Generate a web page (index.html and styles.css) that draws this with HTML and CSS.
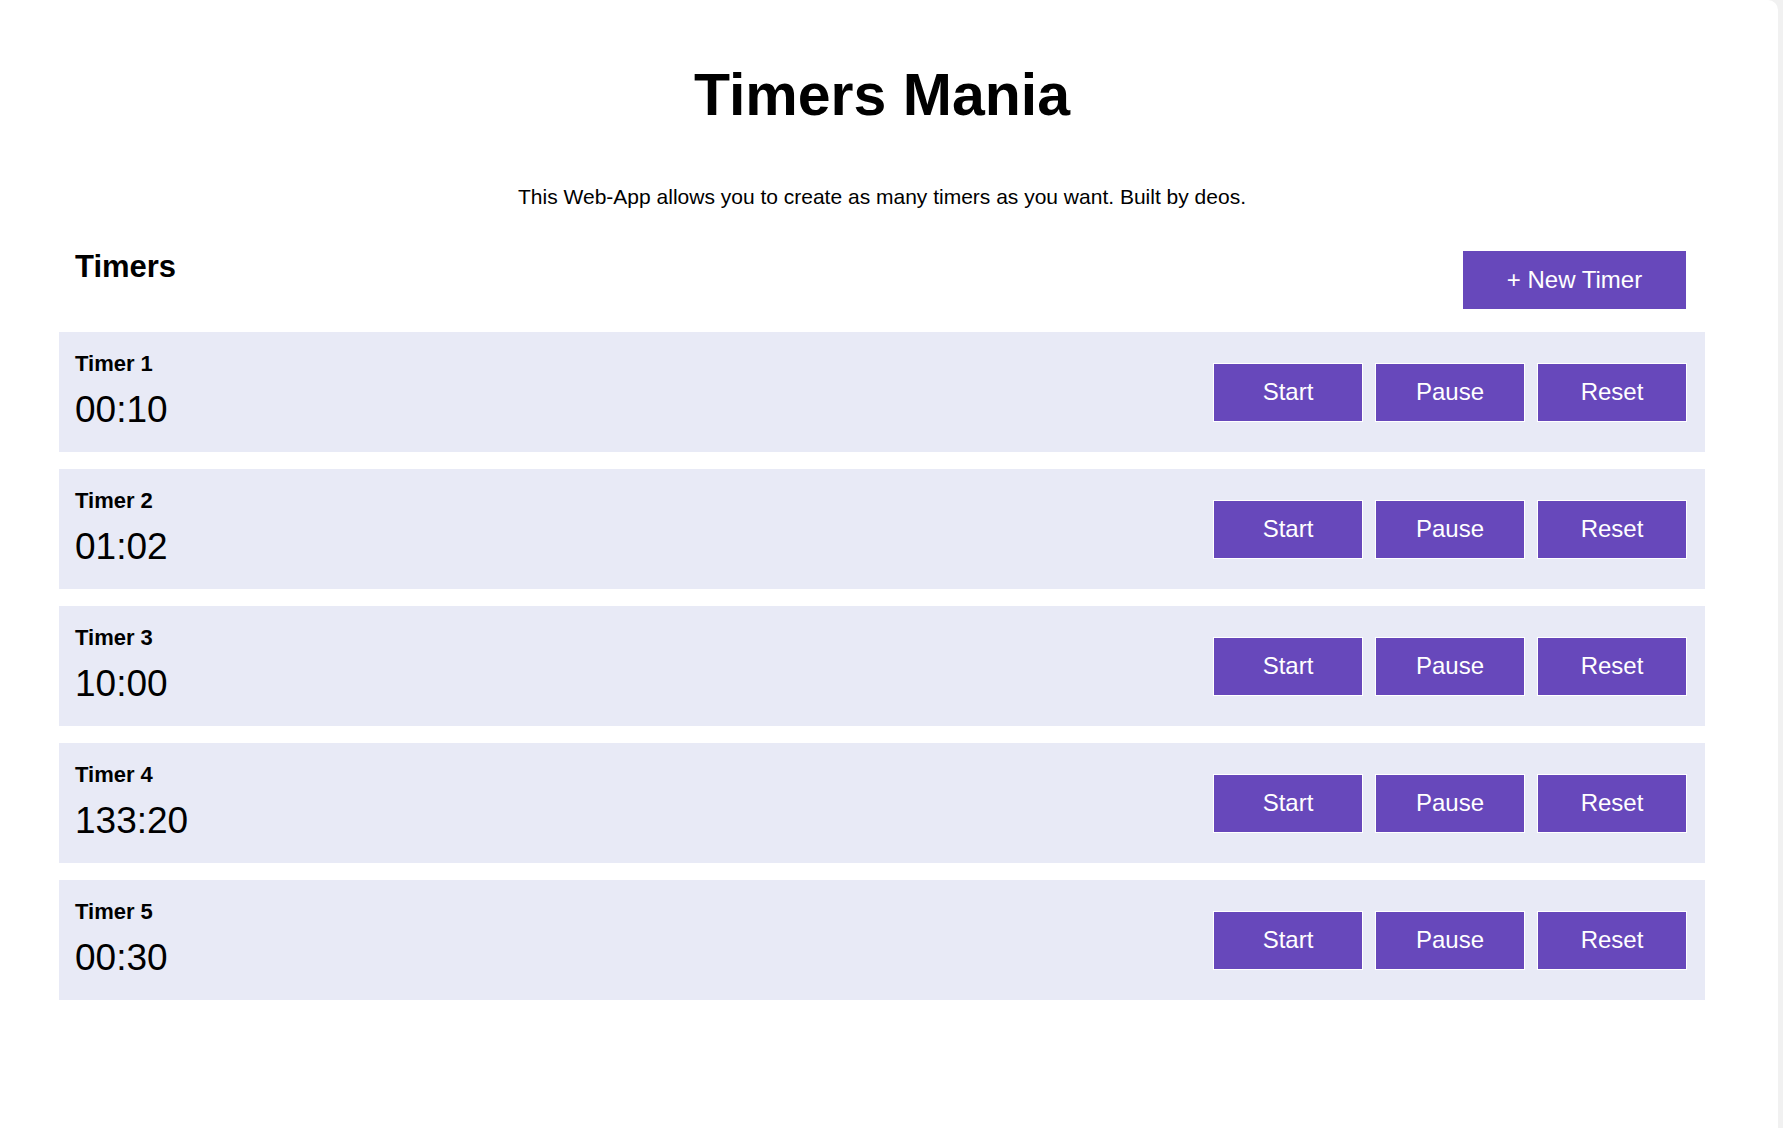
FILE: index.html
```html
<!DOCTYPE html>
<html lang="en">
<head>
<meta charset="utf-8">
<title>Timers Mania</title>
<link rel="stylesheet" href="styles.css">
</head>
<body>
<div class="page">
  <main class="container">
    <h1 class="title">Timers Mania</h1>
    <p class="subtitle">This Web-App allows you to create as many timers as you want. Built by deos.</p>
    <div class="header">
      <h2 class="heading">Timers</h2>
      <button class="btn btn-new">+ New Timer</button>
    </div>
    <div class="list">
      <div class="card">
        <div class="info"><div class="label">Timer 1</div><div class="time">00:10</div></div>
        <div class="actions"><button class="btn btn-act">Start</button><button class="btn btn-act">Pause</button><button class="btn btn-act">Reset</button></div>
      </div>
      <div class="card">
        <div class="info"><div class="label">Timer 2</div><div class="time">01:02</div></div>
        <div class="actions"><button class="btn btn-act">Start</button><button class="btn btn-act">Pause</button><button class="btn btn-act">Reset</button></div>
      </div>
      <div class="card">
        <div class="info"><div class="label">Timer 3</div><div class="time">10:00</div></div>
        <div class="actions"><button class="btn btn-act">Start</button><button class="btn btn-act">Pause</button><button class="btn btn-act">Reset</button></div>
      </div>
      <div class="card">
        <div class="info"><div class="label">Timer 4</div><div class="time">133:20</div></div>
        <div class="actions"><button class="btn btn-act">Start</button><button class="btn btn-act">Pause</button><button class="btn btn-act">Reset</button></div>
      </div>
      <div class="card">
        <div class="info"><div class="label">Timer 5</div><div class="time">00:30</div></div>
        <div class="actions"><button class="btn btn-act">Start</button><button class="btn btn-act">Pause</button><button class="btn btn-act">Reset</button></div>
      </div>
    </div>
  </main>
</div>
</body>
</html>
```
FILE: styles.css
```css
html {
  background: #f1f1f1;
}
body {
  margin: 0;
  font-family: "Liberation Sans", Arial, sans-serif;
  color: #000;
}
.page {
  background: #fff;
  width: 1778px;
  min-height: 1128px;
  box-sizing: border-box;
  border-top-right-radius: 10px;
  padding: 66px 0 0 59px;
}
.container {
  width: 1646px;
}
.title {
  margin: 0;
  font-size: 59px;
  line-height: 1;
  font-weight: bold;
  text-align: center;
}
.subtitle {
  margin: 61px 0 0;
  font-size: 21px;
  line-height: 1;
  text-align: center;
}
.header {
  display: flex;
  justify-content: space-between;
  align-items: flex-start;
  margin-top: 44px;
  padding: 0 19px 0 16px;
}
.heading {
  margin: 0;
  font-size: 31px;
  line-height: 1;
  font-weight: bold;
}
.btn {
  font-family: "Liberation Sans", Arial, sans-serif;
  font-size: 24px;
  color: #fff;
  background: #6748bb;
  border: none;
  padding: 0;
  cursor: pointer;
}
.btn-new {
  width: 223px;
  height: 58px;
}
.list {
  margin-top: 23px;
  display: flex;
  flex-direction: column;
  gap: 17px;
}
.card {
  background: #e8eaf6;
  height: 120px;
  box-sizing: border-box;
  padding: 0 18px 0 16px;
  display: flex;
  justify-content: space-between;
  align-items: center;
}
.info {
  align-self: flex-start;
  margin-top: 21px;
  display: flex;
  flex-direction: column;
  gap: 16px;
}
.label {
  font-size: 22px;
  line-height: 1;
  font-weight: bold;
}
.time {
  font-size: 37px;
  line-height: 1;
}
.actions {
  display: flex;
  gap: 12px;
}
.btn-act {
  width: 150px;
  height: 59px;
  border: 1px solid #fff;
  box-sizing: border-box;
}
```
